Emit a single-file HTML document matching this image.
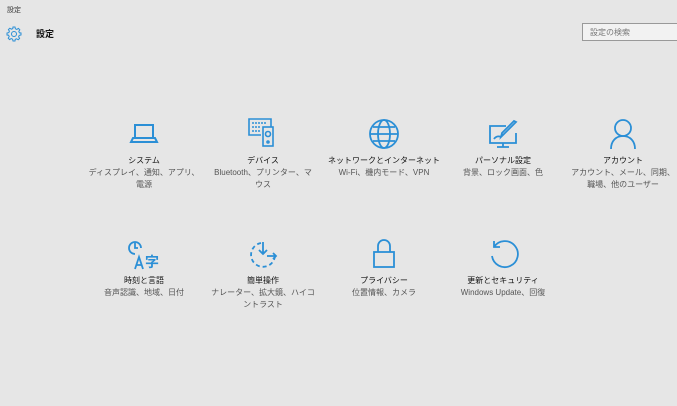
<!DOCTYPE html>
<html><head><meta charset="utf-8"><style>
body{margin:0;width:677px;height:406px;background:#e6e6e6;font-family:"Liberation Sans","Noto Sans CJK JP",sans-serif;overflow:hidden;position:relative;color:#222}
.t{position:absolute;font-size:7px;left:7px;top:5px;color:#333}
.h{position:absolute;left:36px;top:27px;font-size:9px;font-weight:bold;color:#111}
.s{position:absolute;left:582px;top:23px;width:100px;height:18px;border:1px solid #999;background:#f2f2f2;box-sizing:border-box;font-size:8px;color:#777;padding:3px 0 0 7px}
.it{position:absolute;width:118px;text-align:center;}
.it svg{display:block;margin:0 auto}
.n{font-size:8px;color:#111;margin-top:4px;line-height:12px}
.d{font-size:8px;color:#555;line-height:12px}
</style></head><body>
<div class="t">設定</div>
<svg style="position:absolute;left:6px;top:26px" width="16" height="16" viewBox="0 0 16 16" fill="none" stroke="#2b8fd6" stroke-width="1"><circle cx="8" cy="8" r="2.5"/><path d="M7 1h2l.4 1.8 1.4.6 1.6-1 1.4 1.4-1 1.6.6 1.4L15 7v2l-1.8.4-.6 1.4 1 1.6-1.4 1.4-1.6-1-1.4.6L9 15H7l-.4-1.8-1.4-.6-1.6 1-1.4-1.4 1-1.6-.6-1.4L1 9V7l1.8-.4.6-1.4-1-1.6 1.4-1.4 1.6 1 1.4-.6z"/></svg>
<div class="h">設定</div>
<div class="s">設定の検索</div>

<div class="it" style="left:85px;top:117px"><svg width="34" height="34" viewBox="0 0 34 34" fill="none" stroke="#2b8fd6" stroke-width="2"><rect x="8" y="8" width="18" height="13"/><path d="M4 25h26l-2-4H6z"/></svg><div class="n">システム</div><div class="d">ディスプレイ、通知、アプリ、<br>電源</div></div>

<div class="it" style="left:204px;top:117px"><svg width="34" height="34" viewBox="0 0 34 34" fill="none" stroke="#2b8fd6" stroke-width="1.6"><path d="M25 10V2H3v16h12"/><path d="M6 6h14M6 10h8M6 14h8" stroke-dasharray="2 1"/><rect x="17" y="10" width="10" height="19"/><circle cx="22" cy="17" r="2.5"/><circle cx="22" cy="25" r="1"/></svg><div class="n">デバイス</div><div class="d">Bluetooth、プリンター、マ<br>ウス</div></div>

<div class="it" style="left:325px;top:117px"><svg width="34" height="34" viewBox="0 0 34 34" fill="none" stroke="#2b8fd6" stroke-width="1.8"><circle cx="17" cy="17" r="14"/><ellipse cx="17" cy="17" rx="6" ry="14"/><path d="M3 17h28M6 10h22M6 24h22"/></svg><div class="n">ネットワークとインターネット</div><div class="d">Wi-Fi、機内モード、VPN</div></div>

<div class="it" style="left:444px;top:117px"><svg width="34" height="34" viewBox="0 0 34 34" fill="none" stroke="#2b8fd6" stroke-width="1.8"><path d="M20 9H4v17h26V16"/><path d="M17 26v4M11 30h12"/><path d="M30 5l-12 12-3 3 1-4 12-12z"/><path d="M8 22c2-3 5-3 7-2"/></svg><div class="n">パーソナル設定</div><div class="d">背景、ロック画面、色</div></div>

<div class="it" style="left:564px;top:117px"><svg width="34" height="34" viewBox="0 0 34 34" fill="none" stroke="#2b8fd6" stroke-width="1.8"><circle cx="17" cy="11" r="8"/><path d="M5 32c0-8 5-13 12-13s12 5 12 13"/></svg><div class="n">アカウント</div><div class="d">アカウント、メール、同期、<br>職場、他のユーザー</div></div>

<div class="it" style="left:85px;top:237px"><svg width="34" height="34" viewBox="0 0 34 34" fill="none" stroke="#2b8fd6" stroke-width="1.8"><path d="M14 11a6 6 0 1 0-6 6"/><path d="M8 6v5h3"/><path d="M8 32l4-12 4 12M9.5 28h5"/><text x="18" y="30" font-size="14" fill="#2b8fd6" stroke="none" font-family="Noto Sans CJK JP" font-weight="bold">字</text></svg><div class="n">時刻と言語</div><div class="d">音声認識、地域、日付</div></div>

<div class="it" style="left:204px;top:237px"><svg width="34" height="34" viewBox="0 0 34 34" fill="none" stroke="#2b8fd6" stroke-width="1.8"><path d="M29 19a12 12 0 1 1-14-13" stroke-dasharray="4 3"/><path d="M17 5v12M13 13l4 4 4-4M21 19h9M27 16l3 3-3 3"/></svg><div class="n">簡単操作</div><div class="d">ナレーター、拡大鏡、ハイコ<br>ントラスト</div></div>

<div class="it" style="left:325px;top:237px"><svg width="34" height="34" viewBox="0 0 34 34" fill="none" stroke="#2b8fd6" stroke-width="1.8"><rect x="7" y="15" width="20" height="15"/><path d="M11 15V9a6 6 0 0 1 12 0v6"/></svg><div class="n">プライバシー</div><div class="d">位置情報、カメラ</div></div>

<div class="it" style="left:444px;top:237px"><svg width="34" height="34" viewBox="0 0 34 34" fill="none" stroke="#2b8fd6" stroke-width="1.8"><path d="M8 10a13 13 0 1 1-2 9"/><path d="M8 4v6h6"/></svg><div class="n">更新とセキュリティ</div><div class="d">Windows Update、回復</div></div>
</body></html>
